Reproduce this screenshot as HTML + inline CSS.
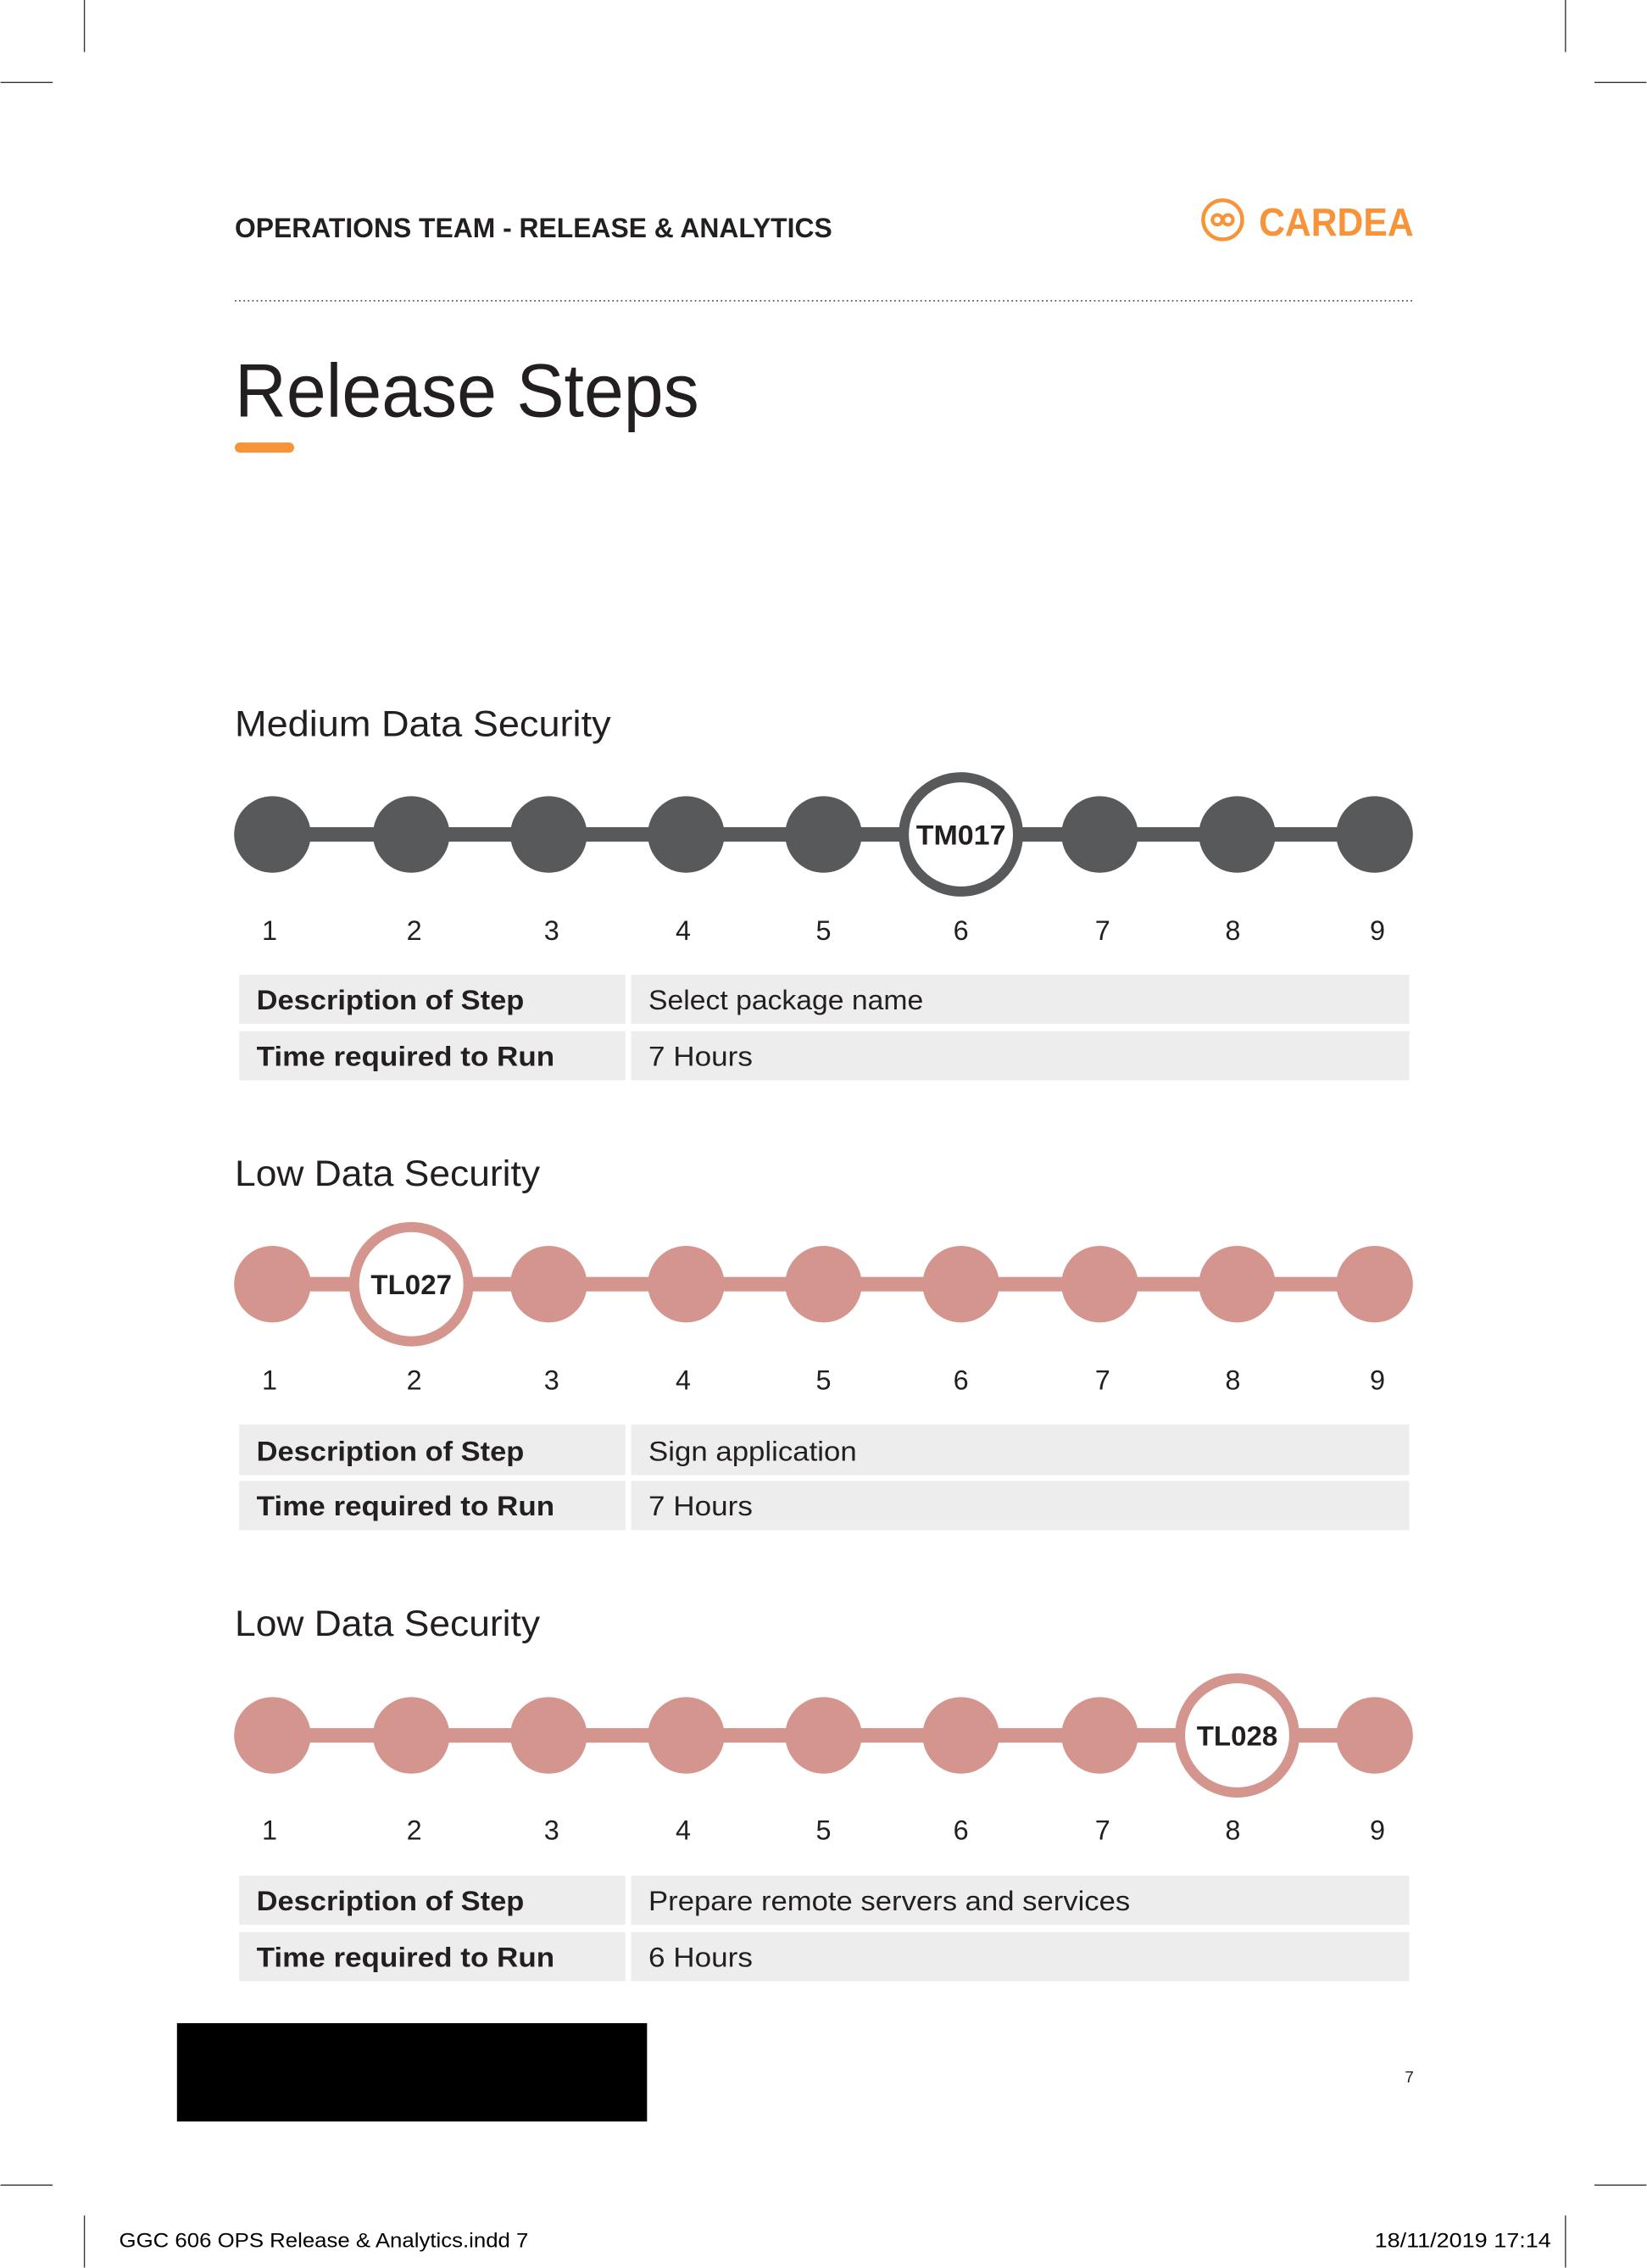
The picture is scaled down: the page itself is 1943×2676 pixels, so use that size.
<!DOCTYPE html>
<html><head><meta charset="utf-8"><style>
html,body{margin:0;padding:0;background:#fff;}
svg{display:block;}
text{font-family:"Liberation Sans",sans-serif;}
</style></head><body>
<svg width="1943" height="2676" viewBox="0 0 1138 1568.3" xmlns="http://www.w3.org/2000/svg">
<g stroke="#333" stroke-width="0.8">
<line x1="58" y1="0" x2="58" y2="36"/><line x1="1082" y1="0" x2="1082" y2="36"/>
<line x1="0" y1="57" x2="36" y2="57"/><line x1="1102" y1="57" x2="1138" y2="57"/>
<line x1="0" y1="1511" x2="36" y2="1511"/><line x1="1102" y1="1511" x2="1138" y2="1511"/>
<line x1="58" y1="1532" x2="58" y2="1568"/><line x1="1082" y1="1532" x2="1082" y2="1568"/>
</g>
<text x="162" y="164" font-size="19" font-weight="bold" fill="#231f20" textLength="413" lengthAdjust="spacingAndGlyphs">OPERATIONS TEAM - RELEASE &amp; ANALYTICS</text>
<circle cx="845" cy="152" r="13.5" fill="none" stroke="#f7943a" stroke-width="2.6"/>
<g fill="none" stroke="#f7943a" stroke-width="2.4"><circle cx="841.3" cy="152" r="3.4"/><circle cx="848.7" cy="152" r="3.4"/></g>
<text x="870" y="163" font-size="27" font-weight="bold" fill="#f7943a" textLength="107" lengthAdjust="spacingAndGlyphs">CARDEA</text>
<line x1="162" y1="208" x2="978" y2="208" stroke="#555" stroke-width="1" stroke-dasharray="1,2"/>
<text x="162" y="288" font-size="52" fill="#231f20" textLength="321" lengthAdjust="spacingAndGlyphs">Release Steps</text>
<rect x="162" y="306" width="41" height="7" rx="3.5" fill="#f7943a"/>

<!-- Section 1 -->
<text x="162" y="509" font-size="25" fill="#231f20" textLength="260" lengthAdjust="spacingAndGlyphs">Medium Data Security</text>
<g fill="#58595b">
<rect x="188" y="572" width="762" height="10"/>
<circle cx="188" cy="577" r="26.5"/><circle cx="284" cy="577" r="26.5"/><circle cx="379" cy="577" r="26.5"/><circle cx="474" cy="577" r="26.5"/><circle cx="569" cy="577" r="26.5"/><circle cx="760" cy="577" r="26.5"/><circle cx="855" cy="577" r="26.5"/><circle cx="950" cy="577" r="26.5"/>
</g>
<circle cx="664" cy="577" r="39.5" fill="#fff" stroke="#58595b" stroke-width="7"/>
<text x="664" y="584" font-size="19" font-weight="bold" fill="#231f20" text-anchor="middle" textLength="62" lengthAdjust="spacingAndGlyphs">TM017</text>
<g font-size="19" fill="#231f20" text-anchor="middle">
<text x="186" y="650">1</text><text x="286" y="650">2</text><text x="381" y="650">3</text><text x="472" y="650">4</text><text x="569" y="650">5</text><text x="664" y="650">6</text><text x="762" y="650">7</text><text x="852" y="650">8</text><text x="952" y="650">9</text>
</g>
<g fill="#ededed"><rect x="165" y="674" width="267" height="34"/><rect x="436" y="674" width="538" height="34"/><rect x="165" y="713" width="267" height="34"/><rect x="436" y="713" width="538" height="34"/></g>
<text x="177" y="698" font-size="19" font-weight="bold" fill="#231f20" textLength="185" lengthAdjust="spacingAndGlyphs">Description of Step</text>
<text x="177" y="737" font-size="19" font-weight="bold" fill="#231f20" textLength="206" lengthAdjust="spacingAndGlyphs">Time required to Run</text>
<text x="448" y="698" font-size="19" fill="#231f20" textLength="190" lengthAdjust="spacingAndGlyphs">Select package name</text>
<text x="448" y="737" font-size="19" fill="#231f20" textLength="72" lengthAdjust="spacingAndGlyphs">7 Hours</text>

<!-- Section 2 -->
<text x="162" y="820" font-size="25" fill="#231f20" textLength="211" lengthAdjust="spacingAndGlyphs">Low Data Security</text>
<g fill="#d3958e">
<rect x="188" y="883" width="762" height="10"/>
<circle cx="188" cy="888" r="26.5"/><circle cx="379" cy="888" r="26.5"/><circle cx="474" cy="888" r="26.5"/><circle cx="569" cy="888" r="26.5"/><circle cx="664" cy="888" r="26.5"/><circle cx="760" cy="888" r="26.5"/><circle cx="855" cy="888" r="26.5"/><circle cx="950" cy="888" r="26.5"/>
</g>
<circle cx="284" cy="888" r="39.5" fill="#fff" stroke="#d3958e" stroke-width="7"/>
<text x="284" y="895" font-size="19" font-weight="bold" fill="#231f20" text-anchor="middle" textLength="56" lengthAdjust="spacingAndGlyphs">TL027</text>
<g font-size="19" fill="#231f20" text-anchor="middle">
<text x="186" y="961">1</text><text x="286" y="961">2</text><text x="381" y="961">3</text><text x="472" y="961">4</text><text x="569" y="961">5</text><text x="664" y="961">6</text><text x="762" y="961">7</text><text x="852" y="961">8</text><text x="952" y="961">9</text>
</g>
<g fill="#ededed"><rect x="165" y="985" width="267" height="35"/><rect x="436" y="985" width="538" height="35"/><rect x="165" y="1024" width="267" height="34"/><rect x="436" y="1024" width="538" height="34"/></g>
<text x="177" y="1010" font-size="19" font-weight="bold" fill="#231f20" textLength="185" lengthAdjust="spacingAndGlyphs">Description of Step</text>
<text x="177" y="1048" font-size="19" font-weight="bold" fill="#231f20" textLength="206" lengthAdjust="spacingAndGlyphs">Time required to Run</text>
<text x="448" y="1010" font-size="19" fill="#231f20" textLength="144" lengthAdjust="spacingAndGlyphs">Sign application</text>
<text x="448" y="1048" font-size="19" fill="#231f20" textLength="72" lengthAdjust="spacingAndGlyphs">7 Hours</text>

<!-- Section 3 -->
<text x="162" y="1131" font-size="25" fill="#231f20" textLength="211" lengthAdjust="spacingAndGlyphs">Low Data Security</text>
<g fill="#d3958e">
<rect x="188" y="1195" width="762" height="10"/>
<circle cx="188" cy="1200" r="26.5"/><circle cx="284" cy="1200" r="26.5"/><circle cx="379" cy="1200" r="26.5"/><circle cx="474" cy="1200" r="26.5"/><circle cx="569" cy="1200" r="26.5"/><circle cx="664" cy="1200" r="26.5"/><circle cx="760" cy="1200" r="26.5"/><circle cx="950" cy="1200" r="26.5"/>
</g>
<circle cx="855" cy="1200" r="39.5" fill="#fff" stroke="#d3958e" stroke-width="7"/>
<text x="855" y="1207" font-size="19" font-weight="bold" fill="#231f20" text-anchor="middle" textLength="56" lengthAdjust="spacingAndGlyphs">TL028</text>
<g font-size="19" fill="#231f20" text-anchor="middle">
<text x="186" y="1272">1</text><text x="286" y="1272">2</text><text x="381" y="1272">3</text><text x="472" y="1272">4</text><text x="569" y="1272">5</text><text x="664" y="1272">6</text><text x="762" y="1272">7</text><text x="852" y="1272">8</text><text x="952" y="1272">9</text>
</g>
<g fill="#ededed"><rect x="165" y="1297" width="267" height="34"/><rect x="436" y="1297" width="538" height="34"/><rect x="165" y="1336" width="267" height="34"/><rect x="436" y="1336" width="538" height="34"/></g>
<text x="177" y="1321" font-size="19" font-weight="bold" fill="#231f20" textLength="185" lengthAdjust="spacingAndGlyphs">Description of Step</text>
<text x="177" y="1360" font-size="19" font-weight="bold" fill="#231f20" textLength="206" lengthAdjust="spacingAndGlyphs">Time required to Run</text>
<text x="448" y="1321" font-size="19" fill="#231f20" textLength="333" lengthAdjust="spacingAndGlyphs">Prepare remote servers and services</text>
<text x="448" y="1360" font-size="19" fill="#231f20" textLength="72" lengthAdjust="spacingAndGlyphs">6 Hours</text>

<rect x="122" y="1399" width="325" height="68" fill="#000"/>
<text x="974" y="1440" font-size="11" fill="#231f20" text-anchor="middle">7</text>
<text x="82" y="1554" font-size="14" fill="#000" textLength="283" lengthAdjust="spacingAndGlyphs">GGC 606 OPS Release &amp; Analytics.indd   7</text>
<text x="1072" y="1554" font-size="14" fill="#000" text-anchor="end" textLength="122" lengthAdjust="spacingAndGlyphs">18/11/2019   17:14</text>
</svg>
</body></html>
